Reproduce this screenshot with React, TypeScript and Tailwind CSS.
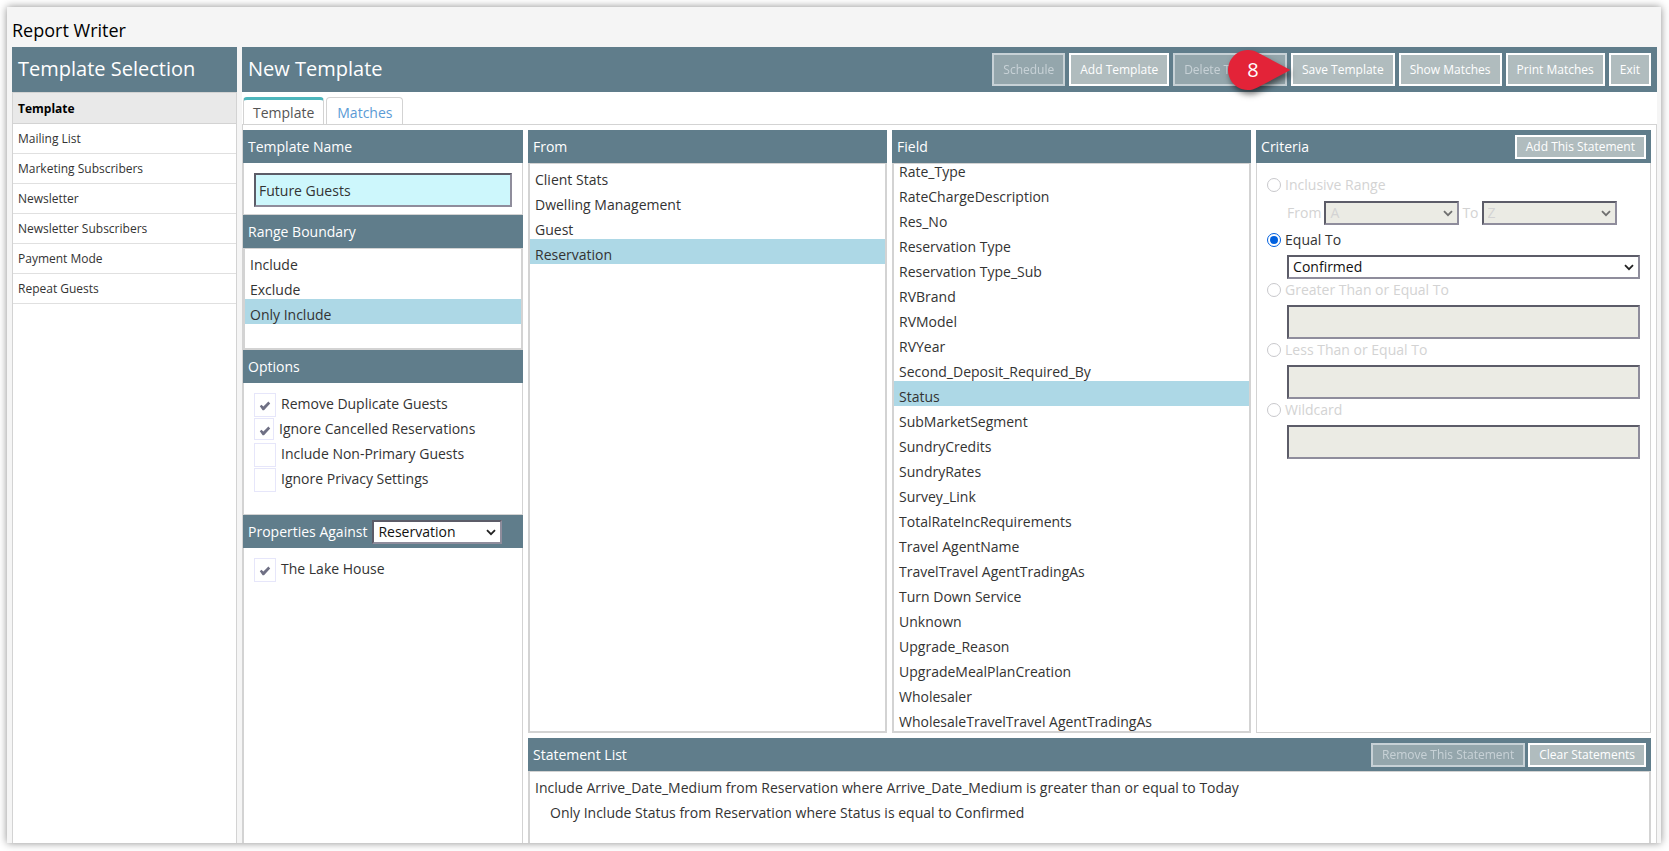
import React, { useState } from 'react';
import clsx from 'clsx';

const TEMPLATES = [
  'Mailing List',
  'Marketing Subscribers',
  'Newsletter',
  'Newsletter Subscribers',
  'Payment Mode',
  'Repeat Guests',
];

const BOUNDARIES = ['Include', 'Exclude', 'Only Include'];

const SOURCES = ['Client Stats', 'Dwelling Management', 'Guest', 'Reservation'];

const FIELDS = [
  'Rate_Type',
  'RateChargeDescription',
  'Res_No',
  'Reservation Type',
  'Reservation Type_Sub',
  'RVBrand',
  'RVModel',
  'RVYear',
  'Second_Deposit_Required_By',
  'Status',
  'SubMarketSegment',
  'SundryCredits',
  'SundryRates',
  'Survey_Link',
  'TotalRateIncRequirements',
  'Travel AgentName',
  'TravelTravel AgentTradingAs',
  'Turn Down Service',
  'Unknown',
  'Upgrade_Reason',
  'UpgradeMealPlanCreation',
  'Wholesaler',
  'WholesaleTravelTravel AgentTradingAs',
];

const INSET = 'border-2 border-t-[#5c5c68] border-l-[#5c5c68] border-r-[#8f8d9c] border-b-[#8f8d9c]';

const PanelHeader = ({ title, children }: { title: string; children?: React.ReactNode }) => (
  <div className="flex h-[33px] shrink-0 items-center bg-[#607d8b] px-[5px] text-white">
    <h3>{title}</h3>
    {children}
  </div>
);

const BarButton = ({ label, disabled, small }: { label: string; disabled?: boolean; small?: boolean }) => (
  <button
    disabled={disabled}
    className={clsx(
      'border-2 border-white bg-[#b0bcbe] px-[9px] text-xs whitespace-nowrap text-white',
      small ? 'h-6 leading-5' : 'h-[33px]',
      disabled && 'opacity-65'
    )}
  >
    {label}
  </button>
);

interface ListProps {
  label: string;
  items: string[];
  selected: string;
  onSelect: (item: string) => void;
  className?: string;
}

const ListBox = ({ label, items, selected, onSelect, className }: ListProps) => (
  <ul
    role="listbox"
    aria-label={label}
    className={clsx('flex flex-col overflow-hidden border-2 border-t border-[#d3d3d3] bg-white', className)}
  >
    {items.map((item) => (
      <li
        key={item}
        role="option"
        aria-selected={item === selected}
        onClick={() => onSelect(item)}
        className={clsx('h-[25px] shrink-0 cursor-default pt-[6px] pl-[5px] leading-5', item === selected && 'bg-[#add8e6]')}
      >
        {item}
      </li>
    ))}
  </ul>
);

const CheckRow = ({ label, checked, small }: { label: string; checked?: boolean; small?: boolean }) => (
  <label className="flex h-[25px] items-start gap-[5px]">
    <span className="relative flex">
      <input
        type="checkbox"
        defaultChecked={checked}
        className={clsx('peer appearance-none border border-[#e6e6fa] bg-white', small ? 'h-[22px] w-5' : 'h-6 w-[22px]')}
      />
      <svg viewBox="0 0 12 10" className="absolute top-2 left-[5px] hidden h-[10px] w-3 peer-checked:block">
        <path d="M0.8 5.2 L2.4 3.8 L4.4 5.6 L9.4 0.6 L11.2 2.4 L5 9.2 L3.6 9.2 Z" fill="#6f7084" />
      </svg>
    </span>
    <span className="leading-[22px]">{label}</span>
  </label>
);

interface SelectProps {
  label: string;
  value: string;
  disabled?: boolean;
  className?: string;
}

const Select = ({ label, value, disabled, className }: SelectProps) => (
  <span className={clsx('relative flex', className)}>
    <select
      aria-label={label}
      defaultValue={value}
      disabled={disabled}
      className={clsx(
        'w-full appearance-none pl-1 leading-5',
        INSET,
        disabled ? 'bg-[#ebebe4] text-[#d3d3d3]' : 'bg-white text-[#111]'
      )}
    >
      <option>{value}</option>
    </select>
    <svg
      viewBox="0 0 10 7"
      className={clsx('pointer-events-none absolute top-[9px] right-[6px] h-[7px] w-[10px]', disabled ? 'text-[#6f6f6f]' : 'text-[#222]')}
    >
      <path d="M1 1.2 L5 5.2 L9 1.2" fill="none" stroke="currentColor" strokeWidth="1.8" />
    </svg>
  </span>
);

const CriteriaRadio = ({ label, checked }: { label: string; checked?: boolean }) => (
  <label className={clsx('flex h-[26px] items-center gap-1 pb-[5px]', !checked && 'text-[#d3d3d3]')}>
    <input
      type="radio"
      name="criteria"
      defaultChecked={checked}
      disabled={!checked}
      className={clsx(
        'flex h-[14px] w-[14px] appearance-none items-center justify-center rounded-full border bg-white',
        checked ? 'border-[#0060df] before:h-2 before:w-2 before:rounded-full before:bg-[#0060df]' : 'border-[#c8c8cc]'
      )}
    />
    {label}
  </label>
);

const CriteriaInput = ({ label }: { label: string }) => (
  <>
    <CriteriaRadio label={label} />
    <input aria-label={`${label} value`} disabled className={clsx('ml-5 h-[34px] bg-[#ebebe4] px-1', INSET)} />
  </>
);

const StepMarker = ({ step }: { step: number }) => (
  <div className="pointer-events-none absolute top-[-3px] right-full mr-px h-10 w-[62px]">
    <svg viewBox="0 0 62 40" className="h-full w-full overflow-visible drop-shadow-[2px_4px_3px_rgba(0,0,0,0.55)]">
      <path d="M61.5 19.4 Q62.5 20 61.5 20.6 L29.5 37.6 A20 20 0 1 1 29.5 2.4 Z" fill="#e32338" />
    </svg>
    <span className="absolute top-0 left-0 w-[50px] text-center text-xl leading-10 text-white">{step}</span>
  </div>
);

const App: React.FC = () => {
  const [boundary, setBoundary] = useState('Only Include');
  const [source, setSource] = useState('Reservation');
  const [field, setField] = useState('Status');

  return (
    <div className="flex min-h-screen bg-white pt-[7px] pr-2 pb-2 pl-[7px] font-['Open_Sans',sans-serif] text-sm text-[#333]">
      <div className="flex flex-1 flex-col bg-[#f5f5f5] pr-1 pl-[5px] shadow-[0_0_8px_rgba(0,0,0,0.45)]">
        <h1 className="flex h-10 items-center pt-[5px] text-lg text-black">Report Writer</h1>

        <div className="flex flex-1 gap-[5px]">
          {/* Saved templates */}
          <aside className="flex w-[225px] shrink-0 flex-col">
            <h2 className="flex h-[45px] items-center bg-[#607d8b] px-[6px] pb-[2px] text-xl text-white">Template Selection</h2>
            <div className="flex-1 border-x border-t border-[#d3d3d3] bg-white text-xs">
              <table className="w-full border-collapse">
                <thead>
                  <tr className="h-[30px] border-b border-[#d3d3d3] bg-[#e9e9e9] text-left text-black">
                    <th className="pt-[2px] pl-[5px]">Template</th>
                  </tr>
                </thead>
                <tbody>
                  {TEMPLATES.map((name) => (
                    <tr key={name} className="h-[30px] border-b border-[#e0e0e0]">
                      <td className="pt-[2px] pl-[5px]">{name}</td>
                    </tr>
                  ))}
                </tbody>
              </table>
            </div>
          </aside>

          {/* Editor */}
          <main className="flex min-w-0 flex-1 flex-col bg-white">
            <div className="flex h-[45px] items-center bg-[#607d8b] px-[6px] text-white">
              <h2 className="flex-1 pb-[2px] text-xl">New Template</h2>
              <div className="flex gap-1">
                <BarButton label="Schedule" disabled />
                <BarButton label="Add Template" />
                <BarButton label="Delete Template" disabled />
                <div className="relative">
                  <BarButton label="Save Template" />
                  <StepMarker step={8} />
                </div>
                <BarButton label="Show Matches" />
                <BarButton label="Print Matches" />
                <BarButton label="Exit" />
              </div>
            </div>

            <nav className="flex h-8 items-end gap-[2px] pl-px">
              <button className="-mb-px h-7 rounded-t border border-t-3 border-[#d3d3d3] border-t-[#4db6bc] border-b-white bg-white px-[9px] pt-[2px] leading-[22px] text-[#555]">
                Template
              </button>
              <button className="h-[27px] rounded-t border border-b-0 border-[#d3d3d3] px-[10px] pt-[3px] text-[#5b9bd5]">Matches</button>
            </nav>

            <div className="grid flex-1 grid-cols-[280px_1fr] gap-[5px] border border-b-0 border-[#d3d3d3] pt-[5px] pr-[5px]">
              <div className="flex flex-col">
                <PanelHeader title="Template Name" />
                <div className="border border-t-0 border-[#d3d3d3] px-[10px] pt-[10px] pb-[7px]">
                  <input
                    aria-label="Template Name"
                    defaultValue="Future Guests"
                    className={clsx('h-[34px] w-full bg-[#cdf7fc] px-[3px]', INSET)}
                  />
                </div>
                <PanelHeader title="Range Boundary" />
                <ListBox label="Range Boundary" items={BOUNDARIES} selected={boundary} onSelect={setBoundary} className="h-[102px]" />
                <PanelHeader title="Options" />
                <div className="border border-t-0 border-[#d3d3d3] px-[10px] pt-[10px] pb-[21px]">
                  <CheckRow label="Remove Duplicate Guests" checked />
                  <CheckRow label="Ignore Cancelled Reservations" checked small />
                  <CheckRow label="Include Non-Primary Guests" />
                  <CheckRow label="Ignore Privacy Settings" />
                </div>
                <PanelHeader title="Properties Against">
                  <Select label="Properties Against" value="Reservation" className="ml-[5px] w-[130px]" />
                </PanelHeader>
                <div className="flex-1 border-x border-[#d3d3d3] px-[10px] pt-[10px]">
                  <CheckRow label="The Lake House" checked />
                </div>
              </div>

              <div className="flex min-w-0 flex-col gap-[5px]">
                <div className="grid grid-cols-[10fr_10fr_11fr] gap-[5px]">
                  <section>
                    <PanelHeader title="From" />
                    <ListBox label="From" items={SOURCES} selected={source} onSelect={setSource} className="h-[570px]" />
                  </section>
                  <section>
                    <PanelHeader title="Field" />
                    <ListBox label="Field" items={FIELDS} selected={field} onSelect={setField} className="h-[570px] justify-end" />
                  </section>
                  <section className="flex flex-col">
                    <PanelHeader title="Criteria">
                      <div className="ml-auto flex">
                        <BarButton label="Add This Statement" small />
                      </div>
                    </PanelHeader>
                    <form className="flex flex-1 flex-col border border-t-0 border-[#d3d3d3] px-[10px] pt-[11px]">
                      <CriteriaRadio label="Inclusive Range" />
                      <div className="mt-px mb-1 ml-5 flex items-center gap-[3px] text-[#d3d3d3]">
                        From
                        <Select label="Range from" value="A" disabled className="w-[135px]" />
                        To
                        <Select label="Range to" value="Z" disabled className="w-[135px]" />
                      </div>
                      <CriteriaRadio label="Equal To" checked />
                      <Select label="Equal to value" value="Confirmed" className="ml-5" />
                      <CriteriaInput label="Greater Than or Equal To" />
                      <CriteriaInput label="Less Than or Equal To" />
                      <CriteriaInput label="Wildcard" />
                    </form>
                  </section>
                </div>

                <section className="flex flex-1 flex-col">
                  <PanelHeader title="Statement List">
                    <div className="ml-auto flex gap-[3px]">
                      <BarButton label="Remove This Statement" disabled small />
                      <BarButton label="Clear Statements" small />
                    </div>
                  </PanelHeader>
                  <ul className="flex-1 border-x-2 border-t border-[#d3d3d3]">
                    <li className="h-[25px] pt-[6px] pl-[5px] leading-5">
                      Include Arrive_Date_Medium from Reservation where Arrive_Date_Medium is greater than or equal to Today
                    </li>
                    <li className="h-[25px] pt-[6px] pl-5 leading-5">
                      Only Include Status from Reservation where Status is equal to Confirmed
                    </li>
                  </ul>
                </section>
              </div>
            </div>
          </main>
        </div>
      </div>
    </div>
  );
};

export default App;
